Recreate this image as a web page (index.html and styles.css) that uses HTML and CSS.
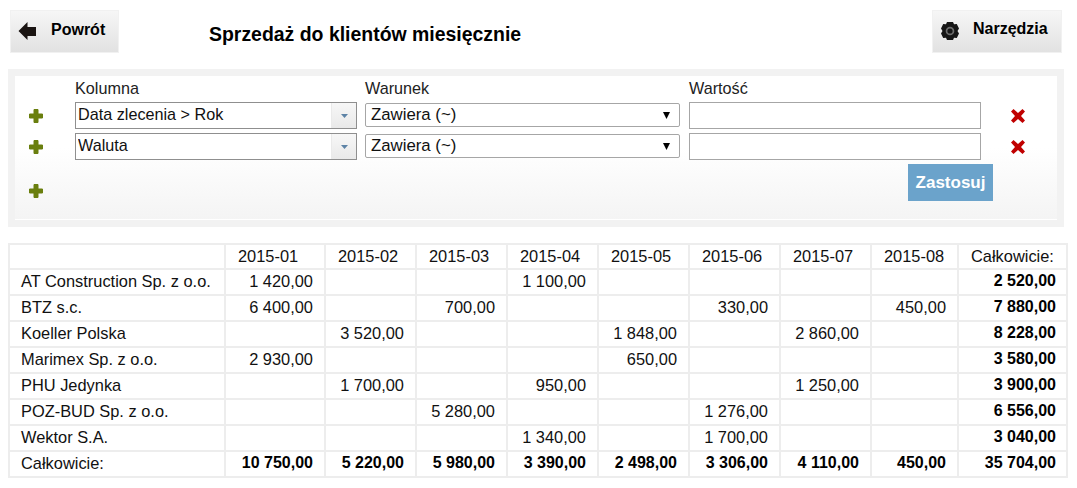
FILE: index.html
```html
<!DOCTYPE html>
<html lang="pl">
<head>
<meta charset="utf-8">
<title>Sprzedaż do klientów miesięcznie</title>
<link rel="stylesheet" href="styles.css">
</head>
<body>
<header class="top">
  <a class="tool back">
    <svg class="ico" width="20" height="20" viewBox="0 0 20 20"><path d="M.5 10 9.500 1V6H18V15H9.500V19Z" fill="#1a1412"/></svg>
    <span class="tool-text">Powrót</span>
  </a>
  <h1 class="title">Sprzedaż do klientów miesięcznie</h1>
  <a class="tool tools">
    <svg class="ico" width="20" height="20" viewBox="0 0 20 20"><path fill="#161616" d="M7 1h6l1 2.300 2.800-.3L19 7.500 17.500 10l1.500 2.500-2.200 4.500-2.800-.3L13 19H7l-1-2.300-2.800.3L1 12.500 2.500 10 1 7.500 3.200 3 6 3.300z"/><circle cx="10" cy="10" r="4.300" fill="#6e6e6e"/><circle cx="10" cy="10" r="2.600" fill="#161616"/></svg>
    <span class="tool-text">Narzędzia</span>
  </a>
</header>

<section class="panel">
  <div class="filters">
    <span></span><label class="lab">Kolumna</label><label class="lab">Warunek</label><label class="lab">Wartość</label><span></span>

    <svg class="plus" width="16" height="16" viewBox="0 0 16 16"><path d="M6 1.500h4V6h4.500v4H10v4.500H6V10H1.500V6H6z" fill="#6a7f0e" stroke="#6a7f0e" stroke-linejoin="round"/></svg>
    <div class="combo"><input class="combo-in" value="Data zlecenia &gt; Rok"><span class="combo-btn"><svg width="7" height="4" viewBox="0 0 7 4"><path d="M0 0h7L3.500 4z" fill="#5d83a6"/></svg></span></div>
    <div class="sel"><select class="sel-in"><option>Zawiera (~)</option></select><svg class="sel-arrow" width="7" height="7" viewBox="0 0 7 7"><path d="M0 0h7L3.500 7z" fill="#000"/></svg></div>
    <input class="val">
    <svg class="del" width="16" height="16" viewBox="0 0 16 16"><path d="M3.500 1 8 5l4.500-4L15 3.500 11 8l4 4.500-2.500 2.500L8 11l-4.500 4L1 12.500 5 8 1 3.500z" fill="#c00000"/></svg>

    <svg class="plus" width="16" height="16" viewBox="0 0 16 16"><path d="M6 1.500h4V6h4.500v4H10v4.500H6V10H1.500V6H6z" fill="#6a7f0e" stroke="#6a7f0e" stroke-linejoin="round"/></svg>
    <div class="combo"><input class="combo-in" value="Waluta"><span class="combo-btn"><svg width="7" height="4" viewBox="0 0 7 4"><path d="M0 0h7L3.500 4z" fill="#5d83a6"/></svg></span></div>
    <div class="sel"><select class="sel-in"><option>Zawiera (~)</option></select><svg class="sel-arrow" width="7" height="7" viewBox="0 0 7 7"><path d="M0 0h7L3.500 7z" fill="#000"/></svg></div>
    <input class="val">
    <svg class="del" width="16" height="16" viewBox="0 0 16 16"><path d="M3.500 1 8 5l4.500-4L15 3.500 11 8l4 4.500-2.500 2.500L8 11l-4.500 4L1 12.500 5 8 1 3.500z" fill="#c00000"/></svg>
  </div>
  <div class="actions">
    <svg class="plus" width="16" height="16" viewBox="0 0 16 16"><path d="M6 1.500h4V6h4.500v4H10v4.500H6V10H1.500V6H6z" fill="#6a7f0e" stroke="#6a7f0e" stroke-linejoin="round"/></svg>
    <button class="apply">Zastosuj</button>
  </div>
</section>

<table class="grid">
  <colgroup><col class="c0"><col class="c1"><col class="cm"><col class="cm"><col class="cm"><col class="cm"><col class="cm"><col class="cm"><col class="c8"><col class="c9"></colgroup>
  <thead>
    <tr><th></th><th>2015-01</th><th>2015-02</th><th>2015-03</th><th>2015-04</th><th>2015-05</th><th>2015-06</th><th>2015-07</th><th>2015-08</th><th>Całkowicie:</th></tr>
  </thead>
  <tbody>
    <tr><td class="name">AT Construction Sp. z o.o.</td><td>1 420,00</td><td></td><td></td><td>1 100,00</td><td></td><td></td><td></td><td></td><td class="b">2 520,00</td></tr>
    <tr><td class="name">BTZ s.c.</td><td>6 400,00</td><td></td><td>700,00</td><td></td><td></td><td>330,00</td><td></td><td>450,00</td><td class="b">7 880,00</td></tr>
    <tr><td class="name">Koeller Polska</td><td></td><td>3 520,00</td><td></td><td></td><td>1 848,00</td><td></td><td>2 860,00</td><td></td><td class="b">8 228,00</td></tr>
    <tr><td class="name">Marimex Sp. z o.o.</td><td>2 930,00</td><td></td><td></td><td></td><td>650,00</td><td></td><td></td><td></td><td class="b">3 580,00</td></tr>
    <tr><td class="name">PHU Jedynka</td><td></td><td>1 700,00</td><td></td><td>950,00</td><td></td><td></td><td>1 250,00</td><td></td><td class="b">3 900,00</td></tr>
    <tr><td class="name">POZ-BUD Sp. z o.o.</td><td></td><td></td><td>5 280,00</td><td></td><td></td><td>1 276,00</td><td></td><td></td><td class="b">6 556,00</td></tr>
    <tr><td class="name">Wektor S.A.</td><td></td><td></td><td></td><td>1 340,00</td><td></td><td>1 700,00</td><td></td><td></td><td class="b">3 040,00</td></tr>
    <tr><td class="name">Całkowicie:</td><td class="b">10 750,00</td><td class="b">5 220,00</td><td class="b">5 980,00</td><td class="b">3 390,00</td><td class="b">2 498,00</td><td class="b">3 306,00</td><td class="b">4 110,00</td><td class="b">450,00</td><td class="b">35 704,00</td></tr>
  </tbody>
</table>
</body>
</html>
```

FILE: styles.css
```css
* { box-sizing: border-box; }
html, body { margin: 0; padding: 0; background: #fff; }
body {
  padding: 10px 8px 0;
  font-family: "Liberation Sans", Arial, sans-serif;
  font-size: 16px;
  color: #111;
  overflow: hidden;
}

.top {
  display: flex;
  align-items: flex-start;
  height: 59px;
  padding: 0 7px 0 2px;
}
.tool {
  display: flex;
  align-items: flex-start;
  height: 43px;
  padding-top: 10px;
  background: linear-gradient(#f6f6f6, #e2e2e2);
  border: 1px solid #f1f1f1;
  color: #000;
  font-weight: 700;
  font-size: 16px;
}
.tool-text { line-height: 20px; margin-top: -1px; }
.back { width: 109px; padding-left: 7px; gap: 13px; }
.tools { width: 130px; margin-left: auto; padding-left: 7px; gap: 13px; }
.tools .tool-text { margin-top: -2px; }
.title {
  margin: 13px 0 0 90px;
  font-size: 19.45px;
  line-height: 22px;
  font-weight: 700;
  color: #000;
}

.panel {
  width: 1056px;
  height: 158px;
  border: 7px solid #f2f2f2;
  background: linear-gradient(#fff 0, #fff 50%, #f4f4f4 100%);
  padding-top: 1px;
  box-shadow: inset 0 -1px 0 #fff;
}
.filters {
  display: grid;
  grid-template-columns: 60px 290px 324px 293px 72px;
  grid-template-rows: 25px 31px 31px;
  align-items: start;
}
.lab { color: #222; line-height: 22px; font-size: 16.2px; }
.plus { justify-self: start; margin-left: 13px; margin-top: 6px; }
.del { justify-self: center; margin-top: 6px; }
.combo {
  display: flex;
  width: 282px;
  height: 27px;
  border: 1px solid #8f8f8f;
  background: #fff;
}
.combo-in {
  flex: 1;
  min-width: 0;
  border: 0;
  padding: 0 2px;
  outline: 0;
  font: 16.2px "Liberation Sans", Arial, sans-serif;
  color: #111;
  background: transparent;
  height: 22px;
}
.combo-btn {
  display: flex;
  align-items: center;
  justify-content: center;
  width: 25px;
  background: linear-gradient(#f7f7f7, #e9e9e9);
  border-left: 1px solid #eaeaea;
}
.sel {
  position: relative;
  width: 315px;
  height: 24px;
  margin-top: 1px;
}
.sel-in {
  appearance: none;
  -webkit-appearance: none;
  display: block;
  width: 100%;
  height: 100%;
  padding: 0 5px 2px;
  border: 1px solid #a6a6a6;
  border-radius: 2px;
  background: #fff;
  font: 16.8px "Liberation Sans", Arial, sans-serif;
  color: #111;
  outline: 0;
}
.sel-arrow { position: absolute; right: 10px; top: 9px; }
.val {
  display: block;
  width: 292px;
  height: 27px;
  border: 1px solid #a6a6a6;
  background: #fff;
  outline: 0;
  padding: 0 4px;
}

.actions {
  display: flex;
  align-items: center;
  height: 37px;
}
.actions .plus { margin: 17px 0 0 13px; width: 16px; }
.apply {
  margin-left: 864px;
  width: 85px;
  height: 37px;
  border: 0;
  padding: 0;
  background: #6ba3cb;
  color: #fff;
  font: 700 17px "Liberation Sans", Arial, sans-serif;
}

.grid {
  margin-top: 16px;
  width: 1059px;
  table-layout: fixed;
  border-collapse: collapse;
}
.c0 { width: 216px; }
.c1 { width: 100px; }
.cm { width: 91px; }
.c8 { width: 87px; }
.c9 { width: 109px; }
.grid th, .grid td {
  border: 2px solid #ededed;
  padding: 0 11px 2px;
  height: 26px;
  font-size: 16.4px;
  font-weight: 400;
  color: #111;
  white-space: nowrap;
  text-align: right;
  line-height: 20px;
}
.grid thead th { height: 25px; text-align: left; padding-left: 12px; }
.grid td.name { text-align: left; }
.grid td.b { font-weight: 700; color: #000; font-size: 16px; }
.grid td:last-child { padding-right: 10px; }
```
